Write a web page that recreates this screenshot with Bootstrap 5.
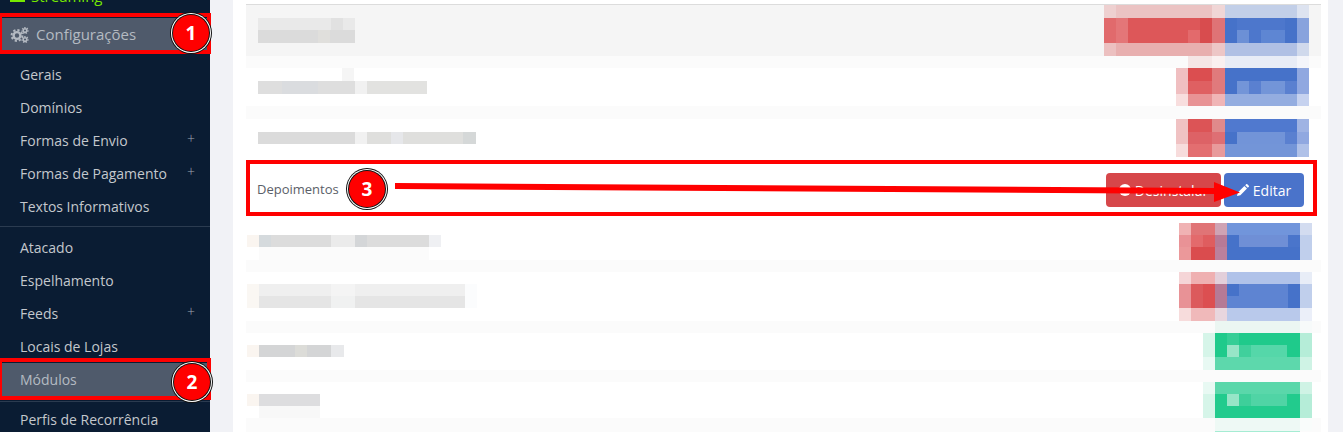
<!DOCTYPE html>
<html lang="pt-BR">
<head>
<meta charset="utf-8">
<title>Módulos</title>
<link href="https://cdn.jsdelivr.net/npm/bootstrap@5.3.0/dist/css/bootstrap.min.css" rel="stylesheet">
<style>
html,body{height:432px;overflow:hidden;}
body{background:#f1f2f6;font-family:"Open Sans","Liberation Sans",sans-serif;}
.stage{position:relative;height:432px;overflow:hidden;}
.side{width:210px;height:432px;background:#0a1c33;flex:none;overflow:hidden;}
.side .nav-link{height:33px;padding:0 0 0 20px;font-size:14px;color:#c4c8cd;display:flex;align-items:center;justify-content:space-between;}
.side .nav-link.on{background:#4f5a6b;color:#b4bac2;}
.side .top-link{font-size:15px;padding-left:10px;justify-content:flex-start;gap:6px;}
.side .stream{color:#76e800;margin-top:-20px;margin-bottom:5px;}
.side .plus{font-size:14px;font-weight:300;color:#a0a8b3;margin-right:15px;line-height:1;margin-top:-3px;}
.sub-a{margin-top:7px;}
.side-rule{border-top:1px solid #2b3b50;margin:3px 0 4px;opacity:1;}
.side-rule.low{margin:5px 0 1px;}
.sheet{width:1095px;height:432px;margin-left:23px;background:#fff;padding:4px 0 0 13px;flex:none;}
.plist{width:1075px;}
.prow{display:flex;justify-content:space-between;align-items:flex-start;padding-right:12px;background:linear-gradient(#fbfbfb 12px,#fff 12px);}
.prow svg{display:block;flex:none;}
.r1{height:52px;background:#f5f5f5;border-top:1px solid #dcdcdc;padding-left:12px;}
.r2{height:50px;padding-left:12px;}
.r3{height:51px;padding-left:12px;background:linear-gradient(#fbfbfb 13px,#fff 13px);}
.r4{height:59px;align-items:center;background:#fff;padding:7px 17px 0 11px;}
.r5{height:44px;padding-left:1px;padding-right:9px;background:#fff;}
.r6{height:61px;padding-left:1px;padding-right:9px;}
.r7{height:49px;padding-left:1px;padding-right:9px;}
.r8{height:48px;padding-left:1px;padding-right:9px;}
.r9{height:14px;padding-left:1px;padding-right:9px;background:#fbfbfb;}
.pname{font-size:13px;color:#5b6068;}
.act{gap:3px;}
.act .btn{height:34px;font-size:14px;padding:0;border-radius:4px;border:0;display:flex;align-items:center;gap:4px;color:#fff;}
.act .btn-danger{background:#d6474a;width:115px;justify-content:center;}
.act .btn-primary{background:#4a73ca;width:80px;justify-content:center;}
.mark-box{position:absolute;border:4px solid #f00;pointer-events:none;}
.mb1{left:0;top:13px;width:211px;height:41px;border-left-width:2px;}
.mb2{left:0;top:358px;width:211px;height:42px;border-left-width:2px;}
.mb3{left:246px;top:160px;width:1071px;height:56px;}
.num{position:absolute;width:36px;height:36px;border-radius:50%;background:#f00;color:#fff;font-weight:700;font-size:19px;line-height:1;display:flex;align-items:center;justify-content:center;box-shadow:0 0 0 1px #111,0 0 0 2px #fff,0 0 0 3px #111;}
.n1{left:173px;top:15px;}
.n2{left:174px;top:364px;}
.n3{left:349px;top:171px;}
.pointer{position:absolute;left:0;top:0;}
</style>
</head>
<body>
<div class="stage d-flex">
  <nav class="side">
    <a class="nav-link top-link stream" href="#"><svg width="15" height="12" viewBox="0 0 15 12"><path d="M1 1h13v9H1z" fill="none" stroke="#76e800" stroke-width="2"/></svg><span>Streaming</span></a>
    <a class="nav-link top-link on" href="#"><svg width="20" height="18" viewBox="0 0 20 18"><g fill="none" stroke="#b4bac2"><circle cx="7" cy="9.5" r="3.4" stroke-width="2.4"/><circle cx="7" cy="9.5" r="5.4" stroke-width="2" stroke-dasharray="2.2 2"/><circle cx="15" cy="4.5" r="1.8" stroke-width="1.5"/><circle cx="15" cy="13.5" r="1.8" stroke-width="1.5"/><circle cx="15" cy="4.5" r="3" stroke-width="1.2" stroke-dasharray="1.4 1.2"/><circle cx="15" cy="13.5" r="3" stroke-width="1.2" stroke-dasharray="1.4 1.2"/></g></svg><span>Configurações</span></a>
    <div class="sub-a">
      <a class="nav-link" href="#">Gerais</a>
      <a class="nav-link" href="#">Domínios</a>
      <a class="nav-link" href="#">Formas de Envio<span class="plus">+</span></a>
      <a class="nav-link" href="#">Formas de Pagamento<span class="plus">+</span></a>
      <a class="nav-link" href="#">Textos Informativos</a>
    </div>
    <div class="side-rule"></div>
    <a class="nav-link" href="#">Atacado</a>
    <a class="nav-link" href="#">Espelhamento</a>
    <a class="nav-link" href="#">Feeds<span class="plus">+</span></a>
    <a class="nav-link" href="#">Locais de Lojas</a>
    <a class="nav-link on" href="#">Módulos</a>
    <div class="side-rule low"></div>
    <a class="nav-link" href="#">Perfis de Recorrência</a>
  </nav>
  <main class="sheet">
    <div class="plist">
      <div class="prow r1">
        <svg width="97" height="51" shape-rendering="crispEdges"><rect y="13" width="97" height="12" fill="#e9e9e9"/><rect x="73" y="13" width="12" height="12" fill="#e1e1e1"/><rect y="25" width="97" height="13" fill="#dbdbdb"/><rect x="60" y="25" width="12" height="13" fill="#e0dfdc"/></svg>
        <svg width="205" height="51" shape-rendering="crispEdges"><rect width="121" height="13" fill="#ebc3c3"/><rect width="12" height="13" fill="#eed0d0"/><rect x="108" width="13" height="13" fill="#f0d6d6"/><rect x="121" width="72" height="13" fill="#c2cfe8"/><rect x="193" width="12" height="13" fill="#dde3f0"/>
        <rect y="13" width="121" height="25" fill="#dd5759"/><rect y="13" width="12" height="25" fill="#e16a6c"/><rect x="12" y="13" width="12" height="25" fill="#e47678"/><rect x="84" y="25" width="12" height="13" fill="#e36a6c"/><rect x="96" y="13" width="12" height="25" fill="#d84c4e"/><rect x="108" y="13" width="13" height="25" fill="#df7376"/>
        <rect x="121" y="13" width="72" height="25" fill="#4d77cc"/><rect x="121" y="13" width="12" height="25" fill="#4672c9"/><rect x="181" y="13" width="12" height="25" fill="#4672c9"/><rect x="133" y="25" width="12" height="13" fill="#6c90d6"/><rect x="157" y="25" width="24" height="13" fill="#5e86d3"/><rect x="193" y="13" width="12" height="25" fill="#88a3dd"/>
        <rect y="38" width="121" height="13" fill="#e8afaf"/><rect y="38" width="12" height="13" fill="#ecc0c0"/><rect x="108" y="38" width="13" height="13" fill="#edc6c6"/><rect x="121" y="38" width="72" height="13" fill="#b0c0e4"/><rect x="193" y="38" width="12" height="13" fill="#d0d9ec"/></svg>
      </div>
      <div class="prow r2">
        <svg width="169" height="50" shape-rendering="crispEdges"><rect y="25" width="97" height="13" fill="#dedede"/><rect x="24" y="25" width="36" height="13" fill="#dadcdf"/><rect x="97" y="25" width="12" height="13" fill="#f1f1f1"/><rect x="109" y="25" width="60" height="13" fill="#e2e2e0"/><rect x="84" y="12" width="12" height="13" fill="#f5f5f5"/></svg>
        <svg width="133" height="50" shape-rendering="crispEdges"><rect x="12" width="24" height="12" fill="#f5e6e6"/><rect x="36" width="13" height="12" fill="#faf0f0"/><rect x="49" width="72" height="12" fill="#e8ecf6"/><rect x="121" width="12" height="12" fill="#f4f5fa"/>
        <rect y="12" width="12" height="26" fill="#f0bfc1"/><rect x="12" y="12" width="24" height="13" fill="#db4e50"/><rect x="12" y="25" width="24" height="13" fill="#df6062"/><rect x="36" y="12" width="13" height="26" fill="#e07a7c"/><rect x="49" y="12" width="72" height="26" fill="#4672c9"/><rect x="61" y="25" width="48" height="13" fill="#7395d8"/><rect x="73" y="25" width="12" height="13" fill="#5a80d0"/><rect x="109" y="25" width="12" height="13" fill="#5a80d0"/><rect x="121" y="12" width="12" height="26" fill="#90a8e0"/>
        <rect y="38" width="12" height="12" fill="#f8dede"/><rect x="12" y="38" width="24" height="12" fill="#e89395"/><rect x="36" y="38" width="13" height="12" fill="#f0b5b6"/><rect x="49" y="38" width="72" height="12" fill="#94ade0"/><rect x="121" y="38" width="12" height="12" fill="#c6d2ef"/></svg>
      </div>
      <div class="prow r3">
        <svg width="218" height="51" shape-rendering="crispEdges"><rect y="26" width="97" height="12" fill="#dbdbdb"/><rect x="97" y="26" width="12" height="12" fill="#f1f1f1"/><rect x="109" y="26" width="109" height="12" fill="#dfdfdd"/><rect x="133" y="26" width="12" height="12" fill="#e6e7ea"/><rect x="205" y="26" width="13" height="12" fill="#d5d8d8"/></svg>
        <svg width="133" height="51" shape-rendering="crispEdges"><rect y="13" width="12" height="25" fill="#f0c2c3"/><rect x="12" y="13" width="24" height="13" fill="#dc5456"/><rect x="12" y="26" width="24" height="12" fill="#dd6266"/><rect x="36" y="13" width="13" height="13" fill="#e08a8b"/><rect x="36" y="26" width="13" height="12" fill="#de6f74"/><rect x="49" y="13" width="72" height="13" fill="#5079cf"/><rect x="49" y="26" width="72" height="12" fill="#7294d8"/><rect x="49" y="26" width="12" height="12" fill="#4672c9"/><rect x="109" y="26" width="12" height="12" fill="#5a80d0"/><rect x="121" y="13" width="12" height="13" fill="#9fb3e3"/><rect x="121" y="26" width="12" height="12" fill="#90a8e0"/>
        <rect y="38" width="12" height="13" fill="#f7dcdc"/><rect x="12" y="38" width="24" height="13" fill="#e36e70"/><rect x="36" y="38" width="13" height="13" fill="#e89a9b"/><rect x="49" y="38" width="72" height="13" fill="#7395d8"/><rect x="121" y="38" width="12" height="13" fill="#afc1e8"/></svg>
      </div>
      <div class="prow r4">
        <span class="pname">Depoimentos</span>
        <div class="act d-flex">
          <a class="btn btn-danger" href="#"><svg width="12" height="12" viewBox="0 0 12 12"><circle cx="6" cy="6" r="6" fill="#fff"/><rect x="2.5" y="5" width="7" height="2" fill="#d6474a"/></svg>Desinstalar</a>
          <a class="btn btn-primary" href="#"><svg width="12" height="12" viewBox="0 0 12 12"><path d="M0 12l.8-3.4 6.6-6.6 2.6 2.6-6.6 6.6zM8.2 1.2l1-1a.8.8 0 0 1 1.1 0l1.5 1.5a.8.8 0 0 1 0 1.1l-1 1z" fill="#fff"/></svg>Editar</a>
        </div>
      </div>
      <div class="prow r5">
        <svg width="194" height="44" shape-rendering="crispEdges"><rect y="19" width="12" height="12" fill="#faf5f0"/><rect x="12" y="19" width="72" height="12" fill="#dcdcdc"/><rect x="12" y="19" width="12" height="12" fill="#d5dadd"/><rect x="84" y="19" width="24" height="12" fill="#ebebeb"/><rect x="108" y="19" width="74" height="12" fill="#dcdcdc"/><rect x="108" y="19" width="12" height="12" fill="#d4d6d8"/><rect x="182" y="19" width="12" height="12" fill="#eff0f3"/><rect x="12" y="31" width="170" height="13" fill="#fbfbfb"/></svg>
        <svg width="133" height="44" shape-rendering="crispEdges"><rect y="7" width="12" height="12" fill="#f0b2b3"/><rect x="12" y="7" width="24" height="12" fill="#e07476"/><rect x="36" y="7" width="12" height="12" fill="#cfa3b4"/><rect x="48" y="7" width="73" height="12" fill="#7195db"/><rect x="121" y="7" width="12" height="12" fill="#d3dcf0"/>
        <rect y="19" width="12" height="12" fill="#e99296"/><rect x="12" y="19" width="12" height="12" fill="#e36a6c"/><rect x="24" y="19" width="12" height="12" fill="#df5d5f"/><rect x="36" y="19" width="12" height="12" fill="#b87a96"/><rect x="48" y="19" width="73" height="12" fill="#6f8fd6"/><rect x="48" y="19" width="12" height="12" fill="#4672c9"/><rect x="109" y="19" width="12" height="12" fill="#4a75cb"/><rect x="121" y="19" width="12" height="25" fill="#c0cfec"/>
        <rect y="31" width="12" height="13" fill="#eb989a"/><rect x="12" y="31" width="24" height="13" fill="#da4c4e"/><rect x="36" y="31" width="12" height="13" fill="#bb809c"/><rect x="48" y="31" width="73" height="13" fill="#4672c9"/></svg>
      </div>
      <div class="prow r6">
        <svg width="230" height="61" shape-rendering="crispEdges"><rect y="24" width="12" height="24" fill="#faf7f3"/><rect x="12" y="24" width="206" height="12" fill="#efefef"/><rect x="84" y="24" width="24" height="12" fill="#f4f4f4"/><rect x="218" y="24" width="12" height="24" fill="#fbfcfd"/><rect x="12" y="36" width="206" height="12" fill="#e5e5e5"/><rect x="84" y="36" width="24" height="12" fill="#f0f1f1"/></svg>
        <svg width="133" height="61" shape-rendering="crispEdges"><rect y="12" width="12" height="12" fill="#f5d5d7"/><rect x="12" y="12" width="24" height="12" fill="#efb0b1"/><rect x="36" y="12" width="12" height="12" fill="#e3cfda"/><rect x="48" y="12" width="73" height="12" fill="#b0c2e9"/><rect x="121" y="12" width="12" height="12" fill="#e8edf7"/>
        <rect y="24" width="12" height="24" fill="#e89296"/><rect x="12" y="24" width="12" height="24" fill="#dc5a5c"/><rect x="24" y="24" width="12" height="24" fill="#dc4f51"/><rect x="36" y="24" width="12" height="24" fill="#b57a96"/><rect x="48" y="24" width="73" height="24" fill="#5e84d2"/><rect x="48" y="24" width="12" height="12" fill="#4672c9"/><rect x="109" y="24" width="12" height="24" fill="#4672c9"/><rect x="121" y="24" width="12" height="24" fill="#c0cfec"/>
        <rect y="48" width="12" height="13" fill="#f7dcdc"/><rect x="12" y="48" width="24" height="13" fill="#f0b9ba"/><rect x="36" y="48" width="12" height="13" fill="#e8d6de"/><rect x="48" y="48" width="73" height="13" fill="#b9c9eb"/><rect x="121" y="48" width="12" height="13" fill="#ebeff9"/></svg>
      </div>
      <div class="prow r7">
        <svg width="97" height="49" shape-rendering="crispEdges"><rect y="24" width="12" height="12" fill="#faf5f0"/><rect x="12" y="24" width="72" height="12" fill="#d4d5d6"/><rect x="48" y="24" width="12" height="12" fill="#dcdcd8"/><rect x="84" y="24" width="13" height="12" fill="#e8e9eb"/></svg>
        <svg width="109" height="49" shape-rendering="crispEdges"><rect x="12" width="85" height="12" fill="#ebf6f2"/><rect x="97" width="12" height="12" fill="#f7fafa"/><rect y="12" width="12" height="24" fill="#d6f5e9"/><rect x="12" y="12" width="85" height="24" fill="#1fca8b"/><rect x="24" y="12" width="12" height="12" fill="#35ce96"/><rect x="24" y="24" width="12" height="12" fill="#97e5c7"/><rect x="36" y="24" width="12" height="12" fill="#40d09c"/><rect x="48" y="24" width="36" height="12" fill="#55d7a9"/><rect x="97" y="12" width="12" height="24" fill="#b5edd8"/><rect y="36" width="12" height="13" fill="#e8f9f3"/><rect x="12" y="36" width="85" height="13" fill="#5dd8ac"/><rect x="97" y="36" width="12" height="13" fill="#cff3e5"/></svg>
      </div>
      <div class="prow r8">
        <svg width="73" height="48" shape-rendering="crispEdges"><rect y="24" width="12" height="12" fill="#faf5f0"/><rect x="12" y="24" width="61" height="12" fill="#dddddf"/><rect x="12" y="36" width="61" height="12" fill="#f8f8f8"/></svg>
        <svg width="109" height="48" shape-rendering="crispEdges"><rect y="12" width="12" height="12" fill="#e8f9f3"/><rect x="12" y="12" width="85" height="12" fill="#5ad7aa"/><rect x="97" y="12" width="12" height="12" fill="#cff3e5"/><rect y="24" width="12" height="24" fill="#d6f5e9"/><rect x="12" y="24" width="85" height="24" fill="#22cb8d"/><rect x="24" y="24" width="12" height="12" fill="#97e5c7"/><rect x="36" y="24" width="12" height="12" fill="#3ecf9a"/><rect x="48" y="24" width="36" height="12" fill="#50d4a5"/><rect x="97" y="24" width="12" height="24" fill="#b5edd8"/></svg>
      </div>
      <div class="prow r9">
        <span></span>
        <svg width="109" height="14" shape-rendering="crispEdges"><rect x="12" width="85" height="13" fill="#eef9f5"/><rect x="97" width="12" height="13" fill="#f9fcfb"/><rect x="12" y="13" width="85" height="1" fill="#a5ecd3"/></svg>
      </div>
    </div>
  </main>
  <div class="mark-box mb1"></div>
  <div class="mark-box mb2"></div>
  <div class="mark-box mb3"></div>
  <svg class="pointer" width="1343" height="432"><polygon points="395,183 1214,188 1214,182 1240,192.5 1214,202 1214,194 395,189" fill="#f00"/></svg>
  <div class="num n1">1</div>
  <div class="num n2">2</div>
  <div class="num n3">3</div>
</div>
<script src="https://cdn.jsdelivr.net/npm/bootstrap@5.3.0/dist/js/bootstrap.bundle.min.js"></script>
</body>
</html>
